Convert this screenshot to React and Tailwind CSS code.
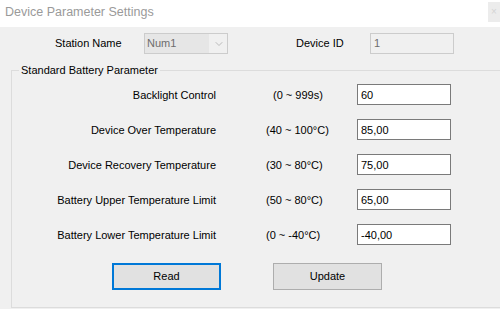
import { ChevronDown } from "lucide-react";

const rows = [
  { label: "Backlight Control", range: "(0 ~ 999s)", value: "60", indent: "pl-[7px]" },
  { label: "Device Over Temperature", range: "(40 ~ 100°C)", value: "85,00", indent: "" },
  { label: "Device Recovery Temperature", range: "(30 ~ 80°C)", value: "75,00", indent: "" },
  { label: "Battery Upper Temperature Limit", range: "(50 ~ 80°C)", value: "65,00", indent: "" },
  { label: "Battery Lower Temperature Limit", range: "(0 ~ -40°C)", value: "-40,00", indent: "" },
];

function ParamRow({ label, range, value, indent }) {
  return (
    <div className="h-[35px] flex items-center">
      <div className="w-[204px] text-right pt-[1px]">{label}</div>
      <div className={`w-[91px] ml-[50px] pt-[1px] ${indent}`}>{range}</div>
      <input
        readOnly
        value={value}
        className="w-[94px] h-[21px] border border-[#7a7a7a] bg-white px-[3px] text-black outline-none"
      />
    </div>
  );
}

export default function App() {
  return (
    <div className="w-[500px] h-[309px] overflow-hidden flex flex-col bg-[#f0f0f0] text-[11px] text-black font-['Liberation_Sans',Arial,sans-serif]">
      {/* TITLE BAR */}
      <div className="h-[27px] bg-white flex justify-between shrink-0">
        <div className="pl-[5px] pt-[3px] text-[12.5px] text-[#9a9a9a]">Device Parameter Settings</div>
        <div className="w-[12px] h-[20px] mt-[2px] bg-[#ececec] text-[#d4d4d4] text-[10px] leading-[20px] pl-[3px]">×</div>
      </div>

      {/* STATION / DEVICE ID */}
      <div className="flex items-center pl-[55px] pt-[6px] shrink-0">
        <div className="w-[89px]">Station Name</div>
        <div className="w-[84px] h-[21px] border border-[#cccccc] flex items-center">
          <div className="w-[64px] h-[19px] bg-[#e6e6e6] text-[#6d6d6d] leading-[19px] pl-[2px]">Num1</div>
          <ChevronDown size={12} strokeWidth={1.5} className="ml-[4px] text-[#a8a8a8]" />
        </div>
        <div className="w-[74px] ml-[68px]">Device ID</div>
        <div className="w-[84px] h-[21px] border border-[#cccccc] text-[#6d6d6d] leading-[19px] pl-[3px]">1</div>
      </div>

      {/* STANDARD BATTERY PARAMETER */}
      <fieldset className="ml-[11px] mt-[10px] w-[500px] h-[244px] border border-[#dcdcdc] shrink-0">
        <legend className="ml-[7px] px-[2px] leading-[13px]">Standard Battery Parameter</legend>
        {rows.map((r) => (
          <ParamRow key={r.label} {...r} />
        ))}
        <div className="flex mt-[11px]">
          <button className="ml-[100px] w-[109px] h-[27px] bg-[#e1e1e1] border-2 border-[#0078d7]">Read</button>
          <button className="ml-[52px] w-[109px] h-[27px] bg-[#e1e1e1] border border-[#adadad]">Update</button>
        </div>
      </fieldset>
    </div>
  );
}
